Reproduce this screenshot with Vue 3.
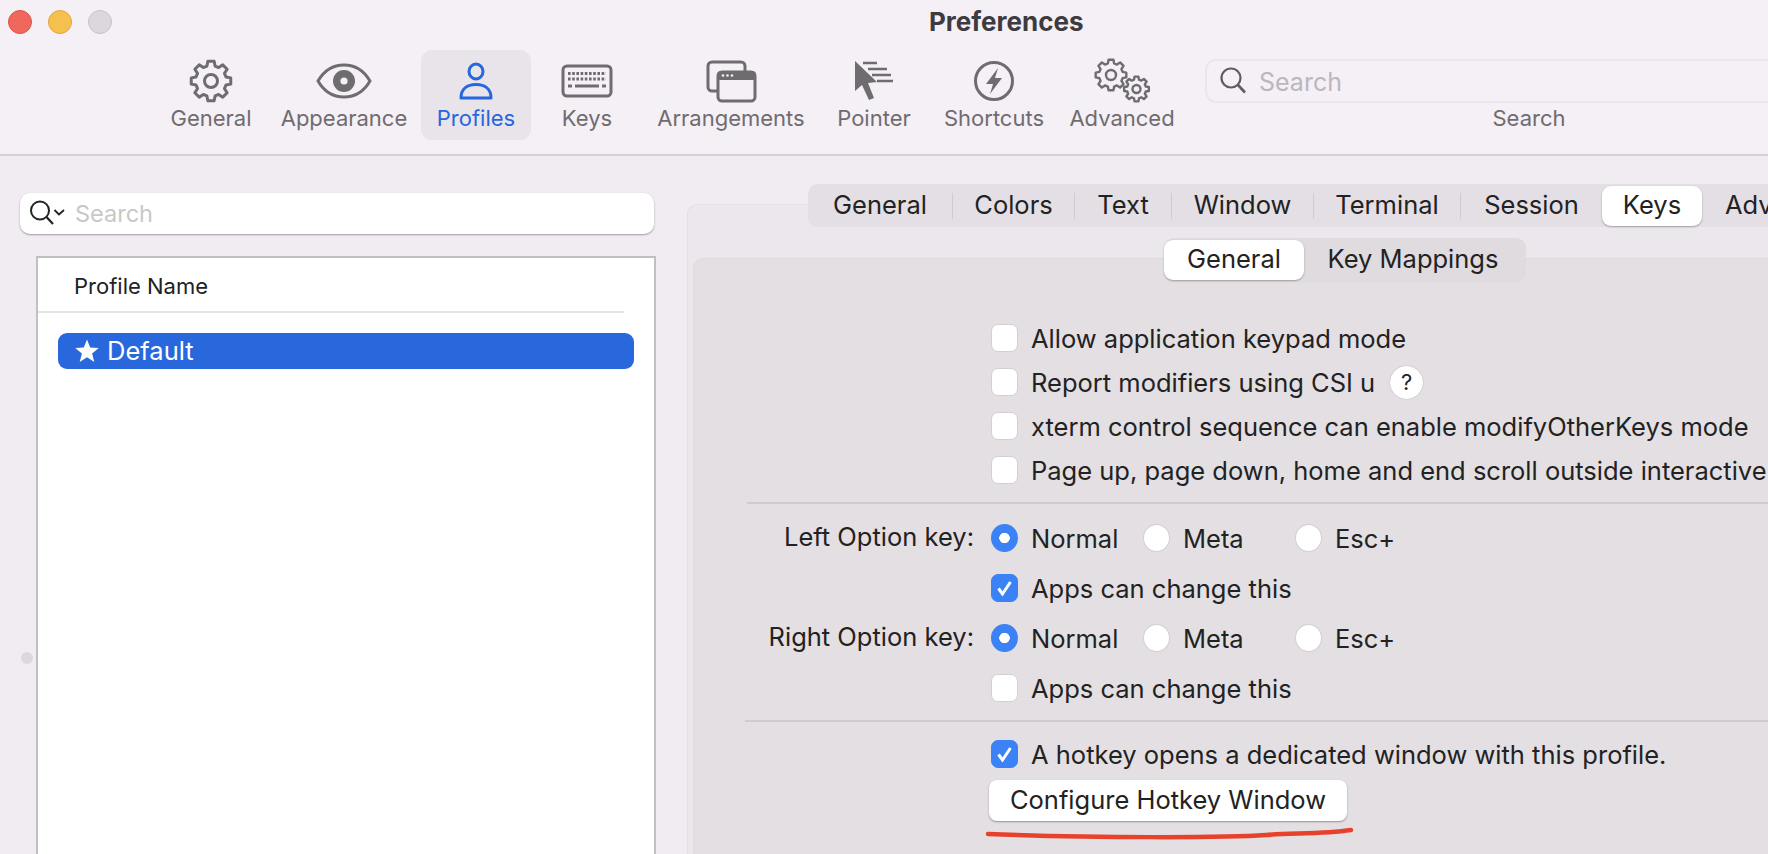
<script setup>
// gear outline, teeth with a flat top, used by General and Advanced
const gear = (cx, cy, outer, inner, teeth) => {
  const step = (Math.PI * 2) / teeth
  const pts = []
  for (let i = 0; i < teeth; i++) {
    const a = i * step - Math.PI / 2
    const list = [
      [inner, a - step * 0.34],
      [outer, a - step * 0.2],
      [outer, a + step * 0.2],
      [inner, a + step * 0.34]
    ]
    for (const [r, t] of list) {
      pts.push((cx + r * Math.cos(t)).toFixed(2) + ' ' + (cy + r * Math.sin(t)).toFixed(2))
    }
  }
  return 'M' + pts.join('L') + 'Z'
}

const generalGear = gear(30, 23, 20, 15.5, 8)
const bigGear = gear(19, 17, 15.5, 12, 8)
const smallGear = gear(44.5, 31, 12.5, 9.6, 8)

const toolbar = [
  { id: 'general', label: 'General', width: 120 },
  { id: 'appearance', label: 'Appearance', width: 146 },
  { id: 'profiles', label: 'Profiles', width: 118, active: true },
  { id: 'keys', label: 'Keys', width: 104 },
  { id: 'arrangements', label: 'Arrangements', width: 184 },
  { id: 'pointer', label: 'Pointer', width: 102 },
  { id: 'shortcuts', label: 'Shortcuts', width: 138 },
  { id: 'advanced', label: 'Advanced', width: 118 }
]

const tabs = [
  { label: 'General', width: 145 },
  { label: 'Colors', width: 122 },
  { label: 'Text', width: 97 },
  { label: 'Window', width: 142 },
  { label: 'Terminal', width: 147 },
  { label: 'Session', width: 141 }
]

const topChecks = [
  { label: 'Allow application keypad mode' },
  { label: 'Report modifiers using CSI u', help: true },
  { label: 'xterm control sequence can enable modifyOtherKeys mode' },
  { label: 'Page up, page down, home and end scroll outside interactive' }
]

const optionKeys = [
  { label: 'Left Option key:', appsChange: true },
  { label: 'Right Option key:', appsChange: false }
]

const radios = ['Normal', 'Meta', 'Esc+']
</script>

<template>
  <div class="window">
    <header class="head">
      <div class="titlebar">
        <div class="lights">
          <span class="light red"></span>
          <span class="light yellow"></span>
          <span class="light gray"></span>
        </div>
        <div class="title">Preferences</div>
      </div>

      <div class="toolbar">
        <div
          v-for="item in toolbar"
          :key="item.id"
          class="tool"
          :class="{ active: item.active }"
          :style="{ width: item.width + 'px' }"
        >
          <div class="tool-inner">
            <svg class="tool-icon" width="60" height="46" viewBox="0 0 60 46">
              <g v-if="item.id === 'general'" fill="none" stroke="#6f6c70" stroke-width="3" stroke-linejoin="round">
                <path :d="generalGear" />
                <circle cx="30" cy="23" r="6.5" />
              </g>
              <g v-else-if="item.id === 'appearance'">
                <path d="M4 23C11 11 20 7 30 7C40 7 49 11 56 23C49 35 40 39 30 39C20 39 11 35 4 23Z" fill="none" stroke="#6f6c70" stroke-width="3" stroke-linejoin="round" />
                <circle cx="30" cy="23" r="11" fill="#6f6c70" />
                <circle cx="30" cy="23" r="3.6" fill="#f5eff6" />
              </g>
              <g v-else-if="item.id === 'profiles'" fill="none" stroke="#2667e0" stroke-width="3" stroke-linejoin="round">
                <ellipse cx="30" cy="13.5" rx="7" ry="7.5" />
                <path d="M15 40C15 31 21 26.500 30 26.500C39 26.500 45 31 45 40Z" />
              </g>
              <g v-else-if="item.id === 'keys'">
                <rect x="6" y="8" width="48" height="30" rx="4" fill="none" stroke="#6f6c70" stroke-width="3" />
                <g stroke="#6f6c70" stroke-width="3" fill="none">
                  <line x1="11" y1="15.500" x2="49" y2="15.500" stroke-dasharray="2.600 1.600" />
                  <line x1="11" y1="21" x2="49" y2="21" stroke-dasharray="2.600 1.600" />
                  <line x1="11" y1="28" x2="15" y2="28" />
                  <line x1="18" y1="28" x2="42" y2="28" />
                  <line x1="45" y1="28" x2="49" y2="28" />
                </g>
              </g>
              <g v-else-if="item.id === 'arrangements'">
                <path d="M16 33H11A4 4 0 0 1 7 29V8A4 4 0 0 1 11 4H40A4 4 0 0 1 44 8V13" fill="none" stroke="#6f6c70" stroke-width="3" />
                <rect x="17" y="14" width="37" height="29" rx="4" fill="none" stroke="#6f6c70" stroke-width="3" />
                <path d="M17 21V17A3 3 0 0 1 20 14H51A3 3 0 0 1 54 17V21Z" fill="#6f6c70" stroke="#6f6c70" stroke-width="2" />
                <circle cx="22" cy="17.500" r="1.300" fill="#f5eff6" />
                <circle cx="26.500" cy="17.500" r="1.300" fill="#f5eff6" />
                <circle cx="31" cy="17.500" r="1.300" fill="#f5eff6" />
              </g>
              <g v-else-if="item.id === 'pointer'">
                <polygon points="11,3 33,24 24,25 30,40 25,42 18,27 11,33" fill="#6f6c70" />
                <g stroke="#6f6c70" stroke-width="2.500">
                  <line x1="19" y1="5" x2="33" y2="5" />
                  <line x1="24" y1="11" x2="43" y2="11" />
                  <line x1="28" y1="17" x2="47" y2="17" />
                  <line x1="33" y1="23" x2="49" y2="23" />
                </g>
              </g>
              <g v-else-if="item.id === 'shortcuts'">
                <circle cx="30" cy="23" r="18.500" fill="none" stroke="#6f6c70" stroke-width="3" />
                <polygon points="34,10 22,26 29,26 26,36 38,20 31,20" fill="#6f6c70" />
              </g>
              <g v-else fill="none" stroke="#6f6c70" stroke-width="2.400" stroke-linejoin="round">
                <path :d="bigGear" />
                <circle cx="19" cy="17" r="5" />
                <path :d="smallGear" />
                <circle cx="44.500" cy="31" r="4" />
              </g>
            </svg>
            <span class="tool-label">{{ item.label }}</span>
          </div>
        </div>

        <div class="tool-search">
          <div class="tool-field">
            <svg width="30" height="30" viewBox="0 0 30 30">
              <circle cx="12" cy="12" r="9.500" fill="none" stroke="#5f5c60" stroke-width="2.200" />
              <line x1="19" y1="19" x2="26" y2="26.500" stroke="#5f5c60" stroke-width="2.600" />
            </svg>
            <span class="tool-placeholder">Search</span>
          </div>
          <span class="tool-label">Search</span>
        </div>
      </div>
    </header>

    <main class="body">
      <span class="handle"></span>

      <aside class="side">
        <div class="side-search">
          <svg width="40" height="30" viewBox="0 0 40 30">
            <circle cx="11" cy="11.500" r="9" fill="none" stroke="#222" stroke-width="2" />
            <line x1="17.500" y1="18" x2="24" y2="25" stroke="#222" stroke-width="2.200" />
            <path d="M25.500 11L30 15.500L35 11" fill="none" stroke="#222" stroke-width="1.800" />
          </svg>
          <span class="side-placeholder">Search</span>
        </div>

        <div class="list">
          <div class="list-head">Profile Name</div>
          <div class="list-row">
            <svg width="26" height="26" viewBox="0 0 26 26">
              <polygon points="13,1.500 16.200,9.600 24.800,10.100 18.100,15.600 20.300,24 13,19.300 5.700,24 7.900,15.600 1.200,10.100 9.800,9.600" fill="#fff" />
            </svg>
            <span class="list-name">Default</span>
          </div>
        </div>
      </aside>

      <section class="outer">
        <div class="tabbar">
          <span v-for="tab in tabs" :key="tab.label" class="tab" :style="{ width: tab.width + 'px' }">{{ tab.label }}</span>
          <span class="tab tab-on">Keys</span>
          <span class="tab tab-adv">Advanced</span>
        </div>

        <div class="inner">
          <div class="segments">
            <span class="segment segment-on">General</span>
            <span class="segment">Key Mappings</span>
          </div>

          <div class="group group-top">
            <div v-for="row in topChecks" :key="row.label" class="row">
              <span class="check"></span>
              <span class="text">{{ row.label }}</span>
              <span v-if="row.help" class="help">?</span>
            </div>
          </div>

          <div class="rule"></div>

          <div class="group group-keys">
            <template v-for="key in optionKeys" :key="key.label">
              <div class="row">
                <span class="row-label">{{ key.label }}</span>
                <div v-for="(radio, i) in radios" :key="radio" class="radio-wrap">
                  <span class="radio" :class="{ on: i === 0 }"></span>
                  <span class="text">{{ radio }}</span>
                </div>
              </div>
              <div class="row">
                <span class="check" :class="{ on: key.appsChange }">
                  <svg v-if="key.appsChange" width="27" height="28" viewBox="0 0 27 28">
                    <path d="M7.500 14.500L11.500 20L19.500 8" fill="none" stroke="#fff" stroke-width="3" />
                  </svg>
                </span>
                <span class="text">Apps can change this</span>
              </div>
            </template>
          </div>

          <div class="rule rule-low"></div>

          <div class="row row-hotkey">
            <span class="check on">
              <svg width="27" height="28" viewBox="0 0 27 28">
                <path d="M7.500 14.500L11.500 20L19.500 8" fill="none" stroke="#fff" stroke-width="3" />
              </svg>
            </span>
            <span class="text">A hotkey opens a dedicated window with this profile.</span>
          </div>

          <div class="button-wrap">
            <span class="button">Configure Hotkey Window</span>
            <svg class="scribble" width="376" height="16" viewBox="0 0 376 16">
              <path d="M4 8C110 12 240 12 282 9C310 7 340 8 367 4" fill="none" stroke="#e8412b" stroke-width="4.500" stroke-linecap="round" />
            </svg>
          </div>
        </div>
      </section>
    </main>
  </div>
</template>

<style scoped>
.window {
  width: 1768px;
  height: 854px;
  overflow: hidden;
  display: flex;
  flex-direction: column;
  background: #f0ecf2;
  font-family: Inter, "Liberation Sans", sans-serif;
  color: #222;
}

.head {
  height: 154px;
  flex: none;
  background: #f5eff6;
  border-bottom: 2px solid #d5d0d6;
  box-sizing: content-box;
}

.titlebar {
  height: 44px;
  position: relative;
  display: flex;
  align-items: center;
}

.lights {
  display: flex;
  gap: 16px;
  padding-left: 8px;
}

.light {
  width: 24px;
  height: 24px;
  border-radius: 50%;
  box-sizing: border-box;
}

.red { background: #f0685c; border: 1px solid #dc5347; }
.yellow { background: #f6c04e; border: 1px solid #e0a83a; }
.gray { background: #dcd7dd; border: 1px solid #c7c2c8; }

.title {
  position: absolute;
  left: 929px;
  top: 7px;
  font-size: 26px;
  line-height: 30px;
  font-weight: 700;
  color: #3e3b40;
}

.toolbar {
  display: flex;
  height: 110px;
  padding-left: 151px;
}

.tool {
  flex: none;
  display: flex;
  justify-content: center;
}

.tool-inner {
  width: 100%;
  height: 90px;
  margin-top: 6px;
  padding-top: 8px;
  box-sizing: border-box;
  display: flex;
  flex-direction: column;
  align-items: center;
  border-radius: 11px;
}

.tool.active .tool-inner {
  width: 110px;
  background: #e9e4ea;
}

.tool-icon {
  display: block;
  flex: none;
}

.tool-label {
  font-size: 22px;
  line-height: 26px;
  margin-top: 1px;
  color: #6f6c70;
  white-space: nowrap;
}

.tool.active .tool-label {
  color: #2667e0;
}

.tool-search {
  flex: none;
  width: 648px;
  margin-left: 24px;
  margin-top: 15px;
  display: flex;
  flex-direction: column;
  align-items: center;
}

.tool-search .tool-label {
  margin-top: 2px;
}

.tool-field {
  width: 100%;
  height: 44px;
  box-sizing: border-box;
  border: 2px solid #ebe6ec;
  border-radius: 11px;
  display: flex;
  align-items: center;
  padding-left: 12px;
  gap: 10px;
}

.tool-placeholder {
  font-size: 25px;
  line-height: 30px;
  padding-top: 2px;
  color: #bcb6bf;
}

.body {
  flex: 1;
  min-height: 0;
  display: flex;
  position: relative;
}

.handle {
  position: absolute;
  left: 21px;
  top: 496px;
  width: 12px;
  height: 12px;
  border-radius: 50%;
  background: #dcd8de;
}

.side {
  width: 687px;
  flex: none;
  display: flex;
  flex-direction: column;
}

.side-search {
  margin: 37px 0 0 20px;
  width: 634px;
  height: 41px;
  flex: none;
  background: #fff;
  border-radius: 10px;
  box-shadow: 0 1px 2px rgba(0, 0, 0, 0.35);
  display: flex;
  align-items: center;
  padding-left: 9px;
  box-sizing: border-box;
  gap: 6px;
}

.side-placeholder {
  font-size: 23.5px;
  color: #c8c8c8;
}

.list {
  margin: 22px 0 0 36px;
  width: 620px;
  flex: 1;
  box-sizing: border-box;
  background: #fff;
  border: 2px solid #c0c0c0;
  border-bottom: none;
}

.list-head {
  width: 586px;
  height: 55px;
  box-sizing: border-box;
  border-bottom: 2px solid #e5e5e5;
  padding: 2px 0 0 36px;
  font-size: 22px;
  line-height: 52px;
  color: #222;
}

.list-row {
  margin: 20px 0 0 20px;
  width: 576px;
  height: 36px;
  background: #2867dc;
  border-radius: 9px;
  color: #fff;
  display: flex;
  align-items: center;
  padding-left: 16px;
  box-sizing: border-box;
  gap: 7px;
  font-size: 25.5px;
}

.list-name {
  padding-bottom: 2px;
}

.outer {
  flex: 1;
  min-width: 0;
  margin-top: 48px;
  background: #ebe7ec;
  border: 1px solid #e4e0e5;
  border-right: none;
  border-bottom: none;
  border-radius: 10px 0 0 0;
}

.tabbar {
  margin: -21px 0 0 120px;
  height: 43px;
  width: 1100px;
  display: flex;
  align-items: center;
  background: #e3dfe4;
  border-radius: 10px;
  font-size: 25.5px;
}

.tab {
  flex: none;
  text-align: center;
  box-sizing: border-box;
  line-height: 24px;
  padding-bottom: 2px;
  border-right: 1px solid #cfcbd0;
  color: #222;
}

.tab:nth-child(6) {
  border-right: none;
}

.tab-on {
  width: 100px;
  height: 40px;
  line-height: 38px;
  background: #fff;
  border-radius: 9px;
  border-right: none;
  box-shadow: 0 1px 2px rgba(0, 0, 0, 0.3);
}

.tab-adv {
  border-right: none;
  margin-left: 23px;
}

.inner {
  margin: 31px 0 0 5px;
  height: 700px;
  background: #e3dfe3;
  border: 1px solid #dedade;
  border-right: none;
  border-radius: 10px 0 0 0;
}

.segments {
  margin: -21px 0 0 470px;
  width: 362px;
  height: 44px;
  display: flex;
  align-items: center;
  background: #dfdbdf;
  border-radius: 10px;
  font-size: 25.5px;
}

.segment {
  flex: 1;
  text-align: center;
  padding: 0 4px 3px 0;
}

.segment-on {
  flex: none;
  width: 140px;
  height: 40px;
  box-sizing: border-box;
  line-height: 37px;
  padding: 0;
  background: #fff;
  border-radius: 9px;
  box-shadow: 0 1px 2px rgba(0, 0, 0, 0.3);
}

.group-top {
  margin-top: 34px;
}

.group-keys {
  display: flex;
  flex-direction: column;
  gap: 6px;
  margin-top: 12px;
}

.row {
  height: 44px;
  display: flex;
  align-items: center;
  padding-left: 297px;
  position: relative;
  font-size: 25.5px;
  white-space: nowrap;
}

.row-label {
  position: absolute;
  right: calc(100% - 280px);
  margin-bottom: 4px;
}

.text {
  margin-left: 13px;
}

.check {
  width: 27px;
  height: 28px;
  flex: none;
  box-sizing: border-box;
  background: #fff;
  border: 1px solid #d3cfd3;
  border-radius: 7px;
}

.check svg {
  display: block;
  margin: -1px;
}

.check.on {
  background: #3b82f6;
  border-color: #3b82f6;
}

.help {
  width: 33px;
  height: 33px;
  margin-left: 15px;
  border-radius: 50%;
  background: #fff;
  text-align: center;
  line-height: 33px;
  font-size: 22px;
  box-shadow: 0 0 1px rgba(0, 0, 0, 0.4);
}

.radio-wrap {
  width: 152px;
  flex: none;
  display: flex;
  align-items: center;
}

.radio {
  width: 27px;
  height: 28px;
  flex: none;
  box-sizing: border-box;
  background: #fff;
  border: 1px solid #d3cfd3;
  border-radius: 50%;
}

.radio.on {
  background: radial-gradient(circle, #fff 0 5px, #3b82f6 5.5px);
  border-color: #3b82f6;
}

.rule {
  margin: 10px 0 0 53px;
  height: 2px;
  background: #cfcbcf;
}

.rule-low {
  margin-left: 51px;
}

.row-hotkey {
  margin-top: 10px;
}

.button-wrap {
  margin: 4px 0 0 295px;
  width: 358px;
  position: relative;
}

.button {
  display: block;
  height: 41px;
  line-height: 39px;
  text-align: center;
  background: #fff;
  border-radius: 8px;
  font-size: 25.5px;
  box-shadow: 0 1px 2px rgba(0, 0, 0, 0.35);
}

.scribble {
  position: absolute;
  left: -5px;
  top: 46px;
}
</style>

<style>
html, body {
  margin: 0;
  overflow: hidden;
}
</style>
